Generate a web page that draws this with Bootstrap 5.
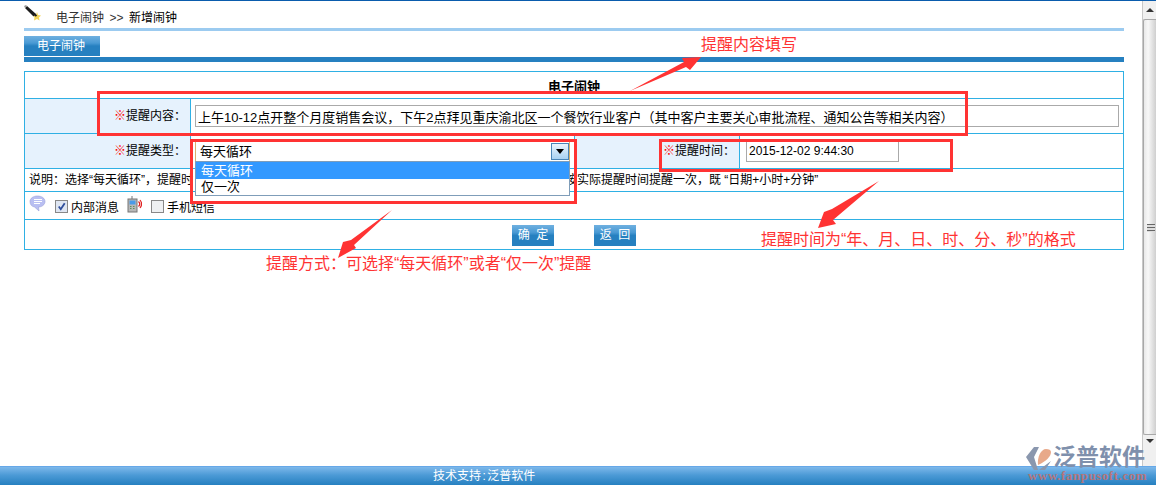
<!DOCTYPE html>
<html lang="zh-CN">
<head>
  <meta charset="UTF-8">
  <title>电子闹钟</title>
  <link href="https://cdn.jsdelivr.net/npm/bootstrap@5.3.2/dist/css/bootstrap.min.css" rel="stylesheet">
  <style>
    html, body { height: 100%; overflow: hidden; }
    body { font-family: "Liberation Sans", "Noto Sans CJK SC", sans-serif; font-size: 12px; color: #000; background: #fff; position: relative; }
    .page-wrap { height: 466px; border-top: 1px solid #0a5cad; }
    .page-main { width: 1142px; padding: 0 18px 0 24px; }
    .crumb-bar { height: 27px; padding-left: 32px; padding-top: 9px; line-height: 16px; color: #333; gap: 5.5px; }
    .crumb-bar b { font-weight: 400; color: #000; }
    .pen-ico { position: absolute; left: 24px; top: 5px; }
    .crumb-line { height: 3px; background: #9ccbf0; }
    .tab-item { width: 76px; height: 20px; margin-top: 5px; line-height: 20px; padding-left: 13px; color: #fff; }
    .blue-grad { background: linear-gradient(#6fb0e0, #4a9ad4 35%, #2680c0 50%, #2680c0); }
    .tab-bar { height: 5px; margin-top: 1px; margin-bottom: 9px; background: #2680c0; }
    .form-tbl { table-layout: fixed; width: 1099px; margin: 0; --bs-border-color: #2fb0e4; --bs-table-border-color: #2fb0e4; color: #000; }
    .form-tbl td { padding: 0; vertical-align: middle; font-size: 12px; line-height: 16px; }
    .form-tbl .lbl-cell { background: #e6f2fd; text-align: right; padding-right: 4px; }
    .lbl-cell i { font-style: normal; font-weight: 700; color: #f00; }
    .form-tbl .tbl-title { height: 27px; font-size: 13px; font-weight: 700; text-align: center; padding-top: 4px; }
    .h-35 { height: 35px; }
    .h-23 { height: 23px; }
    .h-28 { height: 28px; }
    .h-30 { height: 30px; }
    .txt-input { display: block; height: 22px; border: 1px solid #aaa; border-radius: 0; padding: 0 2px; font-size: 13px; line-height: 20px; color: #000; background: #fff; box-shadow: none; }
    .txt-wide { width: 924px; margin-left: 4px; }
    .txt-date { width: 153px; margin-left: 6px; font-size: 12px; }
    .sel-box { width: 375px; height: 21px; margin-left: 4px; border: 1px solid #d8b06c; border-top-color: #e8d4a8; padding-left: 4px; font-size: 13px; line-height: 19px; background: #fff; position: relative; }
    .sel-btn { position: absolute; right: 0; top: 1px; width: 18px; height: 17px; border: 1px solid #4a86b8; background: linear-gradient(#eaf4fc, #a8d2f2); }
    .sel-btn::after { content: ""; position: absolute; left: 4px; top: 5px; border: 4px solid transparent; border-top: 5px solid #000; border-bottom: 0; }
    .sel-list { --bs-dropdown-min-width: 0; left: 195px; top: 161px; width: 375px; padding: 0; margin: 0; border: 1px solid #7f9db9; border-radius: 0; font-size: 13px; }
    .sel-list .dropdown-item { padding: 0 0 0 5px; line-height: 16px; height: 16px; color: #000; font-size: 13px; }
    .sel-list .dropdown-item.active { background: #3399ff; color: #fff; height: 17px; line-height: 17px; }
    .form-tbl .note-cell { padding-left: 4px; white-space: nowrap; }
    .note-gap { margin-left: 372px; }
    .send-row { padding-left: 4px; height: 100%; }
    .send-row .form-check-input { width: 13px; height: 13px; margin: 1px 0 0; border: 1px solid #888; border-radius: 0; background-color: #eef0f2; }
    .send-row .form-check-input:checked { background-color: #dfe6f2; background-image: url("data:image/svg+xml,%3csvg xmlns='http://www.w3.org/2000/svg' viewBox='0 0 12 12'%3e%3cpath fill='none' stroke='%23304f9c' stroke-width='2' d='M3 6l2.2 3L9.5 2.5'/%3e%3c/svg%3e"); background-size: 11px; }
    .send-lbl { margin-top: 4px; margin-left: 3px; }
    .bubble-ico { margin-top: -4px; margin-right: 9px; }
    .phone-ico { margin: -3px 9px 0 8px; }
    .act-btn { width: 42px; height: 21px; border: 0; padding: 0; color: #fff; font-size: 12px; word-spacing: 3px; }
    .act-row { gap: 40px; padding-top: 1px; }
    .scroll-side { width: 14px; background: #f0f0f0; border-left: 1px solid #c8c8c8; }
    .scroll-arrow { height: 18px; position: relative; flex: none; }
    .scroll-arrow::after { content: ""; position: absolute; left: 3px; top: 7px; border: 4px solid transparent; border-bottom: 4px solid #333; border-top: 0; }
    .scroll-arrow.down::after { top: 4px; border-top: 4px solid #333; border-bottom: 0; }
    .scroll-thumb { height: 416px; flex: none; border: 1px solid #a8a8a8; border-right: 0; border-radius: 2px 0 0 2px; background: linear-gradient(90deg, #e8e8e8, #f8f8f8 35%, #cfcfcf); position: relative; }
    .scroll-grip { position: absolute; left: 3px; top: 204px; width: 8px; height: 8px; background: repeating-linear-gradient(#666 0, #666 1px, #ddd 1px, #ddd 3px); }
    .foot-bar { height: 19px; padding-left: 433px; line-height: 19px; color: #fff; border-top: 1px solid #66a8e8; background: linear-gradient(#7db8ea, #4c9ad6 45%, #2680c0); }
    .foot-sep { padding: 0 1.500px; }
    .note-red { position: absolute; font-size: 16px; line-height: 20px; color: #f33; white-space: nowrap; }
    .mark-layer { position: absolute; left: 0; top: 0; pointer-events: none; }
    .logo-wrap { position: absolute; left: 1026px; top: 445px; width: 124px; height: 36px; }
    .logo-ico { position: absolute; left: 0; top: 2px; }
    .logo-cn { position: absolute; left: 27px; top: 1px; font-size: 23px; line-height: 23px; font-weight: 700; color: #7f90ac; white-space: nowrap; }
    .logo-url { position: absolute; left: 2px; top: 25px; font-family: "Liberation Serif", serif; font-size: 13px; line-height: 11px; font-weight: 700; letter-spacing: .55px; color: #b4757a; white-space: nowrap; }
  </style>
</head>
<body>
  <div class="page-wrap d-flex">
    <div class="page-main">
      <svg class="pen-ico" width="18" height="17" viewBox="0 0 18 17">
        <path d="M1 3l2-2 9 8-2.500 2.500z" fill="#1c1c1c"/>
        <path d="M0 1l2-1 1 1-2 2z" fill="#9a9a9a"/>
        <path d="M13 7l1 3 3 .5-2 2 .5 3-2.500-1.500-3 1.500 .5-3-1-1 2.500-1.500z" fill="#f4d55a"/>
        <path d="M10 9l2.500 2" stroke="#1c1c1c" stroke-width="2"/>
      </svg>
      <div class="crumb-bar d-flex"><span>电子闹钟</span><span>&gt;&gt;</span><b>新增闹钟</b></div>
      <div class="crumb-line"></div>
      <div class="tab-item blue-grad">电子闹钟</div>
      <div class="tab-bar"></div>
      <table class="table table-bordered form-tbl">
        <colgroup>
          <col style="width:166px"><col style="width:384px"><col style="width:165px"><col style="width:384px">
        </colgroup>
        <tr><td colspan="4" class="tbl-title">电子闹钟</td></tr>
        <tr class="h-35">
          <td class="lbl-cell"><i>※</i>提醒内容：</td>
          <td colspan="3"><input class="txt-input txt-wide" type="text" value="上午10-12点开整个月度销售会议，下午2点拜见重庆渝北区一个餐饮行业客户（其中客户主要关心审批流程、通知公告等相关内容）"></td>
        </tr>
        <tr class="h-35">
          <td class="lbl-cell"><i>※</i>提醒类型：</td>
          <td><div class="sel-box">每天循环<span class="sel-btn"></span></div></td>
          <td class="lbl-cell"><i>※</i>提醒时间：</td>
          <td><input class="txt-input txt-date" type="text" value="2015-12-02 9:44:30"></td>
        </tr>
        <tr class="h-23">
          <td colspan="4" class="note-cell"><span>说明：选择“每天循环”，提醒时</span><span class="note-gap">按实际提醒时间提醒一次，既 “日期+小时+分钟”</span></td>
        </tr>
        <tr class="h-28">
          <td colspan="4">
            <div class="send-row d-flex align-items-center">
              <svg class="bubble-ico" width="17" height="17" viewBox="0 0 17 17">
                <path d="M8.500 1C12.800 1 16 3.300 16 6.500S12.800 12 9.500 12L10 16 5.500 12C2.500 11.500 1 9.300 1 6.500 1 3.300 4.200 1 8.500 1z" fill="#b9bff2" stroke="#9aa0d8" stroke-width=".6"/>
                <path d="M5 4.500h8M5 6.500h8M5 8.500h6" stroke="#fff" stroke-width="1"/>
              </svg>
              <input class="form-check-input" type="checkbox" checked>
              <span class="send-lbl">内部消息</span>
              <svg class="phone-ico" width="15" height="17" viewBox="0 0 15 17">
                <path d="M5 0v3" stroke="#777" stroke-width="1"/>
                <rect x="1" y="3" width="9" height="13" fill="#b8b8b8" stroke="#777"/>
                <rect x="2.500" y="4.500" width="6" height="4" fill="#4a9be8"/>
                <path d="M3 10.500h1.500M6 10.500h1.500M3 12.500h1.500M6 12.500h1.500" stroke="#5b8f5b"/>
                <path d="M11.500 5.500c1.500 1.500 1.500 3.500 0 5M13 4c2 2.500 2 5.500 0 8" fill="none" stroke="#e02020" stroke-width="1.200"/>
              </svg>
              <input class="form-check-input" type="checkbox">
              <span class="send-lbl">手机短信</span>
            </div>
          </td>
        </tr>
        <tr class="h-30">
          <td colspan="4">
            <div class="act-row d-flex justify-content-center">
              <button class="act-btn blue-grad" type="button">确 定</button>
              <button class="act-btn blue-grad" type="button">返 回</button>
            </div>
          </td>
        </tr>
      </table>
    </div>
    <div class="scroll-side d-flex flex-column">
      <div class="scroll-arrow"></div>
      <div class="scroll-thumb"><div class="scroll-grip"></div></div>
      <div class="scroll-arrow down"></div>
    </div>
  </div>
  <div class="foot-bar">技术支持<span class="foot-sep">:</span>泛普软件</div>

  <ul class="dropdown-menu show sel-list">
    <li><span class="dropdown-item active">每天循环</span></li>
    <li><span class="dropdown-item">仅一次</span></li>
  </ul>

  <svg class="mark-layer" width="1156" height="490" viewBox="0 0 1156 490">
    <g fill="none" stroke="#f33" stroke-width="3">
      <rect x="98.500" y="92.500" width="868" height="42"/>
      <rect x="191.500" y="140.500" width="384" height="62"/>
      <rect x="660.500" y="140.500" width="291" height="30"/>
    </g>
    <g fill="#f33">
      <polygon points="630,91 684,62 682,58 701,57 690,70 686,67"/>
      <polygon points="392,210 351,240 343,242 338,258 356,248 354,245"/>
      <polygon points="879,181 832,209 824,212 818,228 836,224 833,220"/>
    </g>
  </svg>
  <div class="note-red" style="left:701px;top:35px">提醒内容填写</div>
  <div class="note-red" style="left:266px;top:254px">提醒方式：可选择“每天循环”或者“仅一次”提醒</div>
  <div class="note-red" style="left:761px;top:230px">提醒时间为“年、月、日、时、分、秒”的格式</div>

  <div class="logo-wrap">
    <svg class="logo-ico" width="26" height="24" viewBox="0 0 26 24">
      <path d="M8 0h5L8 10l4 13H8L0 10z" fill="#8a97ae"/>
      <path d="M12 18C11 10 15 2 20 2c3 0 5 1 5 3 0 4-4 9-13 13z" fill="#e8a98a"/>
      <path d="M13 23l12-9-6 9z" fill="#8a97ae"/>
    </svg>
    <div class="logo-cn">泛普软件</div>
    <div class="logo-url">www.fanpusoft.com</div>
  </div>
</body>
</html>
